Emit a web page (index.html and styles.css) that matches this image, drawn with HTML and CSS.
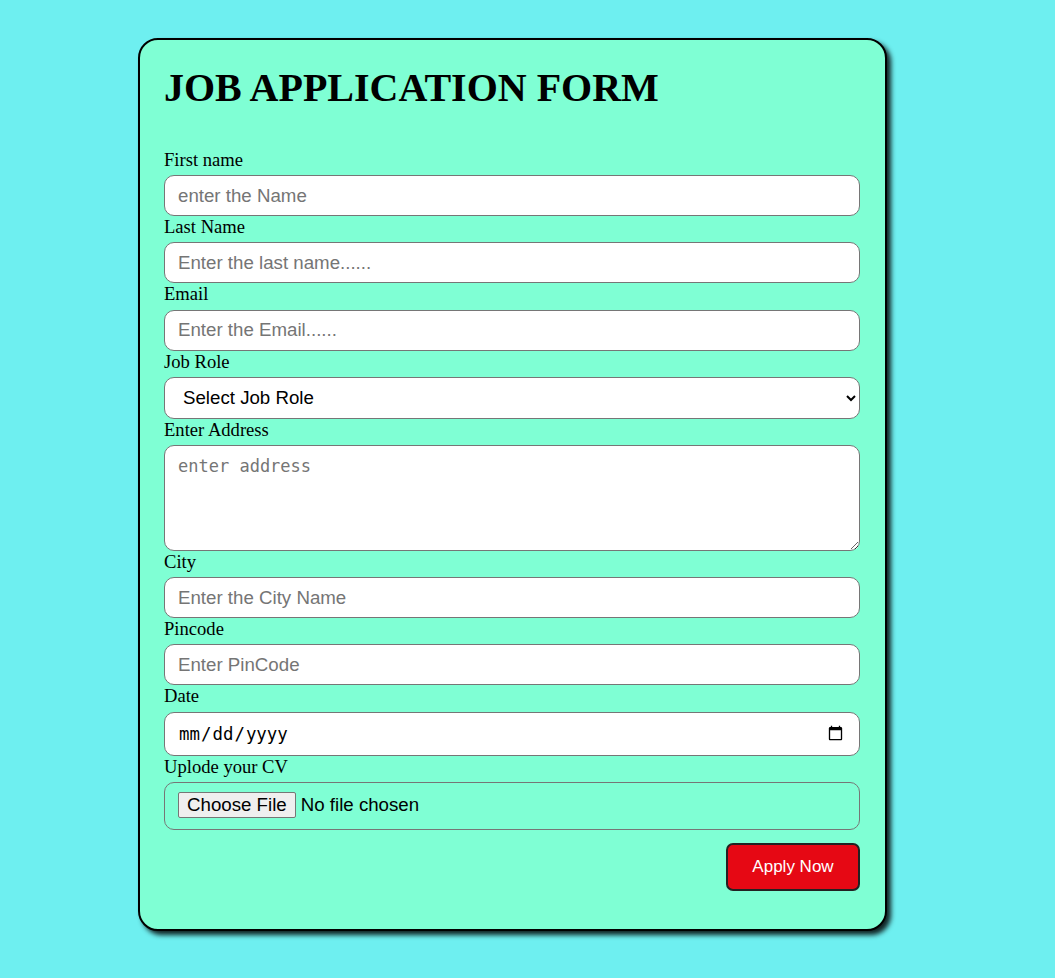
FILE: index.html
```html
<!DOCTYPE html>
<html lang="en">
<head>
<meta charset="utf-8">
<title>Job Application Form</title>
<link rel="stylesheet" href="styles.css">
</head>
<body>
  <form class="card">
    <h1 class="title">JOB APPLICATION FORM</h1>
    <label class="label" for="fname">First name</label>
    <input class="field" id="fname" type="text" placeholder="enter the Name">
    <label class="label" for="lname">Last Name</label>
    <input class="field" id="lname" type="text" placeholder="Enter the last name......">
    <label class="label" for="email">Email</label>
    <input class="field" id="email" type="email" placeholder="Enter the Email......">
    <label class="label" for="role">Job Role</label>
    <select class="field select" id="role">
      <option>Select Job Role</option>
    </select>
    <label class="label" for="addr">Enter Address</label>
    <textarea class="field area" id="addr" placeholder="enter address"></textarea>
    <label class="label" for="city">City</label>
    <input class="field" id="city" type="text" placeholder="Enter the City Name">
    <label class="label" for="pin">Pincode</label>
    <input class="field" id="pin" type="text" placeholder="Enter PinCode">
    <label class="label" for="date">Date</label>
    <input class="field date" id="date" type="date">
    <label class="label" for="cv">Uplode your CV</label>
    <input class="field file" id="cv" type="file">
    <div class="actions">
      <button class="apply" type="button">Apply Now</button>
    </div>
  </form>
</body>
</html>
```

FILE: styles.css
```css
html, body {
  margin: 0;
  padding: 0;
}
body {
  background: #6eeff0;
  font-family: "Liberation Serif", "Times New Roman", serif;
  padding: 38px 0 40px 138px;
}
.card {
  width: 696px;
  padding: 0 25px 38px 24px;
  background: #7fffd4;
  border: 2px solid #000;
  border-radius: 20px;
  box-shadow: 4px 4px 5px rgba(0, 0, 0, 0.85);
  display: flex;
  flex-direction: column;
}
.title {
  font-size: 40px;
  line-height: 46px;
  font-weight: bold;
  margin: 25px 0 38px;
  color: #000;
}
.label {
  display: block;
  font-size: 18.6px;
  line-height: 21.2px;
  margin: 0 0 5px;
  color: #000;
}
.field {
  box-sizing: border-box;
  width: 696px;
  height: 41px;
  margin: 0;
  padding: 0 13px;
  border: 1px solid #767676;
  border-radius: 10px;
  background: #fff;
  font-family: "Liberation Sans", Arial, sans-serif;
  font-size: 18.7px;
  color: #000;
  flex-shrink: 0;
}
.field::placeholder {
  color: #757575;
}
.select {
  height: 42px;
  padding: 0 10px 0 14px;
}
.area {
  height: 106px;
  padding: 10px 13px;
  font-family: "DejaVu Sans Mono", monospace;
  font-size: 17px;
  resize: vertical;
}
.date {
  height: 44px;
  padding: 0 13px;
  font-family: "DejaVu Sans Mono", monospace;
  font-size: 17.4px;
}
.file {
  height: 48px;
  background: transparent;
  padding: 9px 13px;
}
.file::file-selector-button {
  font-family: "Liberation Sans", Arial, sans-serif;
  font-size: 18.7px;
  padding: 1px 8px;
  margin-right: 5px;
  border: 1px solid #767676;
  border-radius: 2px;
  background: #efefef;
  color: #000;
}
.actions {
  display: flex;
  justify-content: flex-end;
  margin-top: 13px;
}
.apply {
  width: 134px;
  height: 48px;
  background: #e60814;
  color: #fff;
  border: 2px solid #222;
  border-radius: 7px;
  font-family: "Liberation Sans", Arial, sans-serif;
  font-size: 17px;
  cursor: pointer;
}
```
